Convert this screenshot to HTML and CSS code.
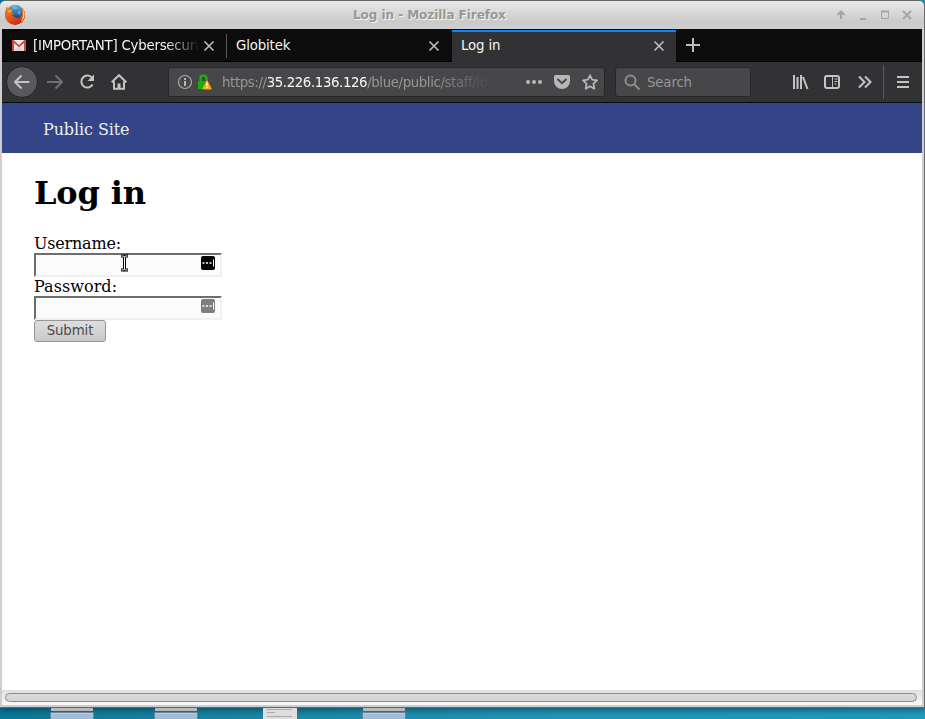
FILE: index.html
```
<!DOCTYPE html>
<html lang="en">
<head>
<meta charset="utf-8">
<title>Log in</title>
<link rel="stylesheet" href="styles.css">
</head>
<body>
<div class="desktop">
  <div class="folder f1"></div>
  <div class="folder f2"></div>
  <div class="document"></div>
  <div class="folder f3"></div>
  <div class="window">
    <div class="titlebar">
      <svg class="fx" width="22" height="22" viewBox="0 0 22 22">
        <defs>
          <linearGradient id="fox" x1="0" y1="0" x2="0.6" y2="1"><stop offset="0" stop-color="#e8871c"/><stop offset=".6" stop-color="#e3561a"/><stop offset="1" stop-color="#c52e16"/></linearGradient>
          <linearGradient id="globe" x1="0" y1="0" x2="0" y2="1"><stop offset="0" stop-color="#5ab4df"/><stop offset="1" stop-color="#123c85"/></linearGradient>
        </defs>
        <circle cx="11" cy="11" r="10" fill="url(#fox)"/>
        <circle cx="11.5" cy="8" r="7.3" fill="url(#globe)"/>
        <path d="M8 2Q12 1 14 4L12 6 9 5ZM15 6 17 8 16 11 13 9Z" fill="#8ccbe5" opacity=".5"/>
        <path d="M1.500 6.500 2.500 2.500 5 5 8.500 5.500 7.500 8 10 9.500 8 11.500 11 13.500C14.500 15.500 18 13 18.500 9.500L18 4C22 7 22 14 18 18 13 22 5 21 2 15 .5 12 .8 9 1.500 6.500Z" fill="url(#fox)"/>
        <path d="M2.500 5 4.500 6 8 5.800 7 8 5 9Z" fill="#f5a32a"/>
        <path d="M18.300 4.500C21.500 8 21.500 14 17 18.200 19 13 19.500 9 18.300 4.500Z" fill="#ffd13a"/>
      </svg>
      <span class="caption">Log in - Mozilla Firefox</span>
      <svg class="controls" width="80" height="16" viewBox="0 0 80 16" fill="none" stroke="#a5a5a5" stroke-width="2">
        <path d="M9 12V5M5.500 8 9 4.500 12.500 8M28 12H34"/>
        <path d="M49.500 4.500H56.500V11.500H49.500Z" stroke-width="1"/><path d="M49 4.500H57"/>
        <path d="M71 4 79 12M79 4 71 12"/>
      </svg>
    </div>
    <div class="tabs">
      <div class="tab first">
        <svg class="gmail" width="14" height="11" viewBox="0 0 14 11"><path d="M0 0H14V11H0Z" fill="#e8e8e8"/><path d="M2 11 7 6 12 11Z" fill="#d3d3d3"/><path d="M0 11V0H1.500L7 5 12.500 0H14V11H12V3L7 7.300 2 3V11Z" fill="#d8463a"/></svg>
        <span class="label fade">[IMPORTANT] Cybersecuri</span>
        <svg class="x" width="12" height="12" viewBox="0 0 12 12"><path d="M1.500 1.500 10.500 10.500M10.500 1.500 1.500 10.500"/></svg>
      </div>
      <div class="tab second">
        <span class="label">Globitek</span>
        <svg class="x" width="12" height="12" viewBox="0 0 12 12"><path d="M1.500 1.500 10.500 10.500M10.500 1.500 1.500 10.500"/></svg>
      </div>
      <div class="tab active">
        <span class="label">Log in</span>
        <svg class="x" width="12" height="12" viewBox="0 0 12 12"><path d="M1.500 1.500 10.500 10.500M10.500 1.500 1.500 10.500"/></svg>
      </div>
      <svg class="plus" width="14" height="14" viewBox="0 0 14 14"><path d="M0 7H14M7 0V14"/></svg>
    </div>
    <div class="toolbar">
      <div class="back"><svg width="16" height="16" viewBox="0 0 16 16"><path d="M15.500 8H1.500M7.500 1.500 1 8 7.500 14.500"/></svg></div>
      <svg class="ico forward" width="16" height="16" viewBox="0 0 16 16"><path d="M0 8H14M8.500 1.500 15 8 8.500 14.500"/></svg>
      <svg class="ico reload" width="16" height="16" viewBox="0 0 16 16"><path d="M13 3.800A6 6 0 1 0 13.600 10.500"/><path d="M15 .5V7H8.500Z" class="solid"/></svg>
      <svg class="ico home" width="16" height="16" viewBox="0 0 16 16"><path d="M.7 8.300 8 1.200 15.300 8.300M3 7.500V14.800H13V7.500"/><path d="M6.500 9.500H9.500V15H6.500Z" class="solid"/></svg>
      <div class="url">
        <svg class="info" width="16" height="16" viewBox="0 0 16 16"><circle cx="8" cy="8" r="6.500" fill="none" stroke="#aaaaab" stroke-width="1.200"/><path d="M8 7V12M8 4V6" stroke="#b5b5b6" stroke-width="2"/></svg>
        <svg class="lock" width="16" height="16" viewBox="0 0 16 16"><path d="M3.500 8V4.500A3 3 0 0 1 9.500 4.500V6" fill="none" stroke="#12bc00" stroke-width="2.200"/><path d="M1 7H11V15H1Z" fill="#12b300"/><path d="M10 6.500 14.300 15H5.700Z" fill="#f6ab0d" stroke="#f6ab0d" stroke-linejoin="round"/><path d="M10 8.500V11.800M10 12.800V14.200" stroke="#fff" stroke-width="1.400"/></svg>
        <span class="address">https://<b>35.226.136.126</b>/blue/public/staff/lo</span>
        <svg class="dots" width="16" height="6" viewBox="0 0 16 6" fill="#b7b7b8"><circle cx="2" cy="3" r="2"/><circle cx="8" cy="3" r="2"/><circle cx="14" cy="3" r="2"/></svg>
        <svg class="pocket" width="16" height="14" viewBox="0 0 16 14"><path d="M1.500 0H14.500Q16 0 16 1.500V6A8 8 0 0 1 0 6V1.500Q0 0 1.500 0Z" fill="#b7b7b8"/><path d="M4 4.500 8 8.200 12 4.500" fill="none" stroke="#474749" stroke-width="2" stroke-linecap="round"/></svg>
        <svg class="star" width="16" height="16" viewBox="0 0 16 16"><path d="M8 1.300 10.100 5.700 15 6.300 11.500 9.700 12.300 14.700 8 12.300 3.700 14.700 4.500 9.700 1 6.300 5.900 5.700Z" fill="none" stroke="#b7b7b8" stroke-width="1.800" stroke-linejoin="round"/></svg>
      </div>
      <div class="search">
        <svg width="17" height="17" viewBox="0 0 17 17"><circle cx="6.500" cy="6.500" r="5" fill="none" stroke="#8d8d8e" stroke-width="2"/><path d="M10.500 10.500 15.500 15.500" stroke="#8d8d8e" stroke-width="2"/></svg>
        <span>Search</span>
      </div>
      <svg class="ico library" width="16" height="16" viewBox="0 0 16 16"><path d="M1 1V15M4.500 3V15M8 1V15M10 3 14.500 15"/></svg>
      <svg class="ico sidebar" width="16" height="16" viewBox="0 0 16 16"><rect x="1" y="2" width="14" height="12" rx="2"/><path d="M8.500 2V14M10.500 5H13.500M10.500 7.500H13.500M10.500 10H12.500" stroke-width="1"/></svg>
      <svg class="ico more" width="14" height="14" viewBox="0 0 14 14"><path d="M1 1.500 6.500 7 1 12.500M7 1.500 12.500 7 7 12.500"/></svg>
      <div class="separator"></div>
      <svg class="ico menu" width="12" height="12" viewBox="0 0 12 12"><path d="M0 1H12M0 6H12M0 11H12"/></svg>
    </div>
    <div class="page">
      <nav><a>Public Site</a></nav>
      <main>
        <h1>Log in</h1>
        <form>
          <label>Username:</label>
          <div class="field">
            <svg class="cursor" width="9" height="18" viewBox="0 0 9 18"><path d="M1 2H3.500L4.500 3 5.500 2H8M4.500 3V15M1 16H3.500L4.500 15 5.500 16H8" fill="none" stroke="#000" stroke-width="3"/><path d="M1.500 2H3.500L4.500 3 5.500 2H7.500M4.500 3V15M1.500 16H3.500L4.500 15 5.500 16H7.500" fill="none" stroke="#fff" stroke-width="1"/></svg>
            <svg class="key" width="14" height="14" viewBox="0 0 14 14"><rect width="14" height="14" rx="2" fill="#000"/><path d="M1.500 7H3.500M5 7H7M8.500 7H10.500" stroke="#fff" stroke-width="1.700"/><path d="M12.500 3.500V10.500" stroke="#fff"/></svg>
          </div>
          <label class="wide">Password:</label>
          <div class="field">
            <svg class="key" width="14" height="14" viewBox="0 0 14 14"><rect width="14" height="14" rx="2" fill="#7e7e7e"/><path d="M1.500 7H3.500M5 7H7M8.500 7H10.500" stroke="#fff" stroke-width="1.700"/><path d="M12.500 3.500V10.500" stroke="#fff"/></svg>
          </div>
          <button type="button">Submit</button>
        </form>
      </main>
    </div>
    <div class="scroll"><div class="thumb"></div></div>
  </div>
</div>
</body>
</html>
```
FILE: styles.css
```
* { box-sizing: border-box; }
body { margin: 0; font-family: "DejaVu Sans", sans-serif; }
svg { display: block; flex: none; }
.desktop {
  position: relative; width: 925px; height: 719px; overflow: hidden;
  background: linear-gradient(90deg, #087897, #1683a0 20%, #2097b7 60%, #219bbf);
}
.window {
  display: flex; flex-direction: column; position: relative;
  width: 925px; height: 708px; background: #cecece;
  border-top: 1px solid #666; border-right: 1px solid #6b6b6b; border-bottom: 1px solid #636363;
  border-radius: 6px 6px 0 0; padding: 0 2px 2px;
  box-shadow: 0 2px 7px rgba(0, 30, 45, .55);
}
.titlebar {
  height: 28px; flex: none; margin: 0 -2px; padding: 0 12px 0 4px;
  display: flex; align-items: center; border-radius: 5px 5px 0 0;
  background: linear-gradient(#e9e9e9, #cacaca 75%, #cecece);
}
.caption {
  flex: 1; padding-left: 327px; font-size: 12px; letter-spacing: -0.05px; font-weight: bold; white-space: nowrap;
  color: #979797; text-shadow: 1px 1px 0 #f4f4f4;
}
.tabs {
  height: 33px; flex: none; display: flex; background: #0c0c0d;
  border-bottom: 1px solid #000; font-size: 13.33px; color: #f5f5f6;
}
.tab { height: 33px; width: 225px; display: flex; align-items: center; position: relative; padding: 0 12px 0 10px; letter-spacing: -0.15px; }
.tab .label { flex: 1; white-space: nowrap; line-height: 20px; margin-top: 1px; }
.tab .label.fade { margin-left: 7px; letter-spacing: -0.23px; -webkit-mask-image: linear-gradient(90deg, #000 78%, transparent 98%); mask-image: linear-gradient(90deg, #000 78%, transparent 98%); }
.first::after { content: ""; position: absolute; right: 0; top: 5px; width: 1px; height: 24px; background: #59595b; }
.second { padding-left: 9px; }
.active { width: 224px; background: #323234; box-shadow: inset 0 1px #000, inset 0 3px #0a84ff; padding: 0 11px 0 9px; }
.x, .plus { fill: none; stroke: #bdbdbe; stroke-width: 1.6; }
.tab .x { margin-top: 1px; }
.plus { margin: 9px 0 0 10px; stroke-width: 2; }
.toolbar {
  height: 41px; flex: none; display: flex; align-items: center;
  background: #323234; border-bottom: 1px solid #0c0c0d; padding-left: 4px;
}
.back {
  width: 32px; height: 32px; border-radius: 50%; background: #59595d;
  border: 1px solid #252527; display: grid; place-items: center;
}
.back svg, .ico { fill: none; stroke: #c4c4c5; stroke-width: 2; }
.ico .solid { fill: #c4c4c5; stroke: none; }
.forward { margin-left: 9px; stroke: #707072; }
.reload { margin-left: 16px; }
.home { margin-left: 16px; }
.url, .search {
  height: 30px; background: #474749; border: 1px solid #28282a; border-radius: 3px;
  display: flex; align-items: center; font-size: 13.33px; color: #969697;
}
.url { width: 437px; margin-left: 41px; padding-left: 8px; }
.lock { margin-left: 4px; }
.address {
  width: 275px; margin: 1px 29px 0 9px; white-space: nowrap; line-height: 20px; letter-spacing: -0.39px;
  -webkit-mask-image: linear-gradient(90deg, #000 77%, transparent 98%); mask-image: linear-gradient(90deg, #000 77%, transparent 98%);
}
.address b { font-weight: normal; color: #f9f9fa; }
.pocket { margin-left: 12px; }
.star { margin-left: 12px; }
.search { width: 136px; margin-left: 10px; padding-left: 8px; gap: 6px; }
.search span { margin-top: 1px; letter-spacing: -0.15px; }
.library { margin-left: 42px; }
.sidebar { margin-left: 15px; }
.more { margin-left: 18px; }
.separator { width: 1px; height: 34px; background: #5a5a5c; margin-left: 11px; }
.menu { margin-left: 13px; }
.page { flex: 1; background: #fff; font-family: "DejaVu Serif", serif; font-size: 16px; letter-spacing: -0.1px; color: #000; }
nav { height: 50px; background: #334488; color: #eee; padding: 1px 41px 0; line-height: 52px; }
main { padding: 21px 32px; }
h1 { margin: 0; font-size: 32px; line-height: 38px; letter-spacing: -0.15px; }
form { margin-top: 22px; display: flex; flex-direction: column; align-items: flex-start; }
label { line-height: 19px; letter-spacing: -0.2px; }
label.wide { letter-spacing: 0.05px; }
.field {
  position: relative; width: 188px; height: 24px; background: #fbfbfb;
  border: 2px solid; border-color: #6d6d6d #f0f0f0 #f0f0f0 #6d6d6d;
}
.key { position: absolute; right: 5px; top: 1px; }
.cursor { position: absolute; left: 84px; top: -1px; }
button {
  width: 72px; height: 22px; padding: 0 0 1px; font: 13.33px "DejaVu Sans", sans-serif; color: #4a4a4a; letter-spacing: -0.1px;
  border: 1px solid #969696; border-radius: 3px; background: linear-gradient(#dedede, #c9c9c9);
}
.scroll { height: 15px; flex: none; padding: 3px 5px 3px 3px; background: linear-gradient(#e0e0e0, #f8f8f8); }
.thumb { height: 9px; border: 1px solid #8b8b8b; border-radius: 5px; background: linear-gradient(#dedede, #d0d0d0); }
.folder { position: absolute; top: 712px; width: 44px; height: 7px; background: #9ebdd9; border: 1px solid #64839a; border-bottom: 0; box-shadow: inset 0 1px #b7d1e6; z-index: 1; }
.folder::before { content: ""; position: absolute; left: 0; top: -5px; width: 42px; height: 3px; background: #bababa; }
.f1 { left: 50px; }
.f2 { left: 154px; }
.f3 { left: 362px; }
.document { position: absolute; z-index: 1; left: 263px; top: 708px; width: 34px; height: 11px; background: linear-gradient(#aaa, #aaa) 4px 1px / 25px 1px no-repeat, linear-gradient(#aaa, #aaa) 4px 4px / 8px 1px no-repeat, linear-gradient(#aaa, #aaa) 4px 8px / 25px 1px no-repeat, #dedede; }
```
